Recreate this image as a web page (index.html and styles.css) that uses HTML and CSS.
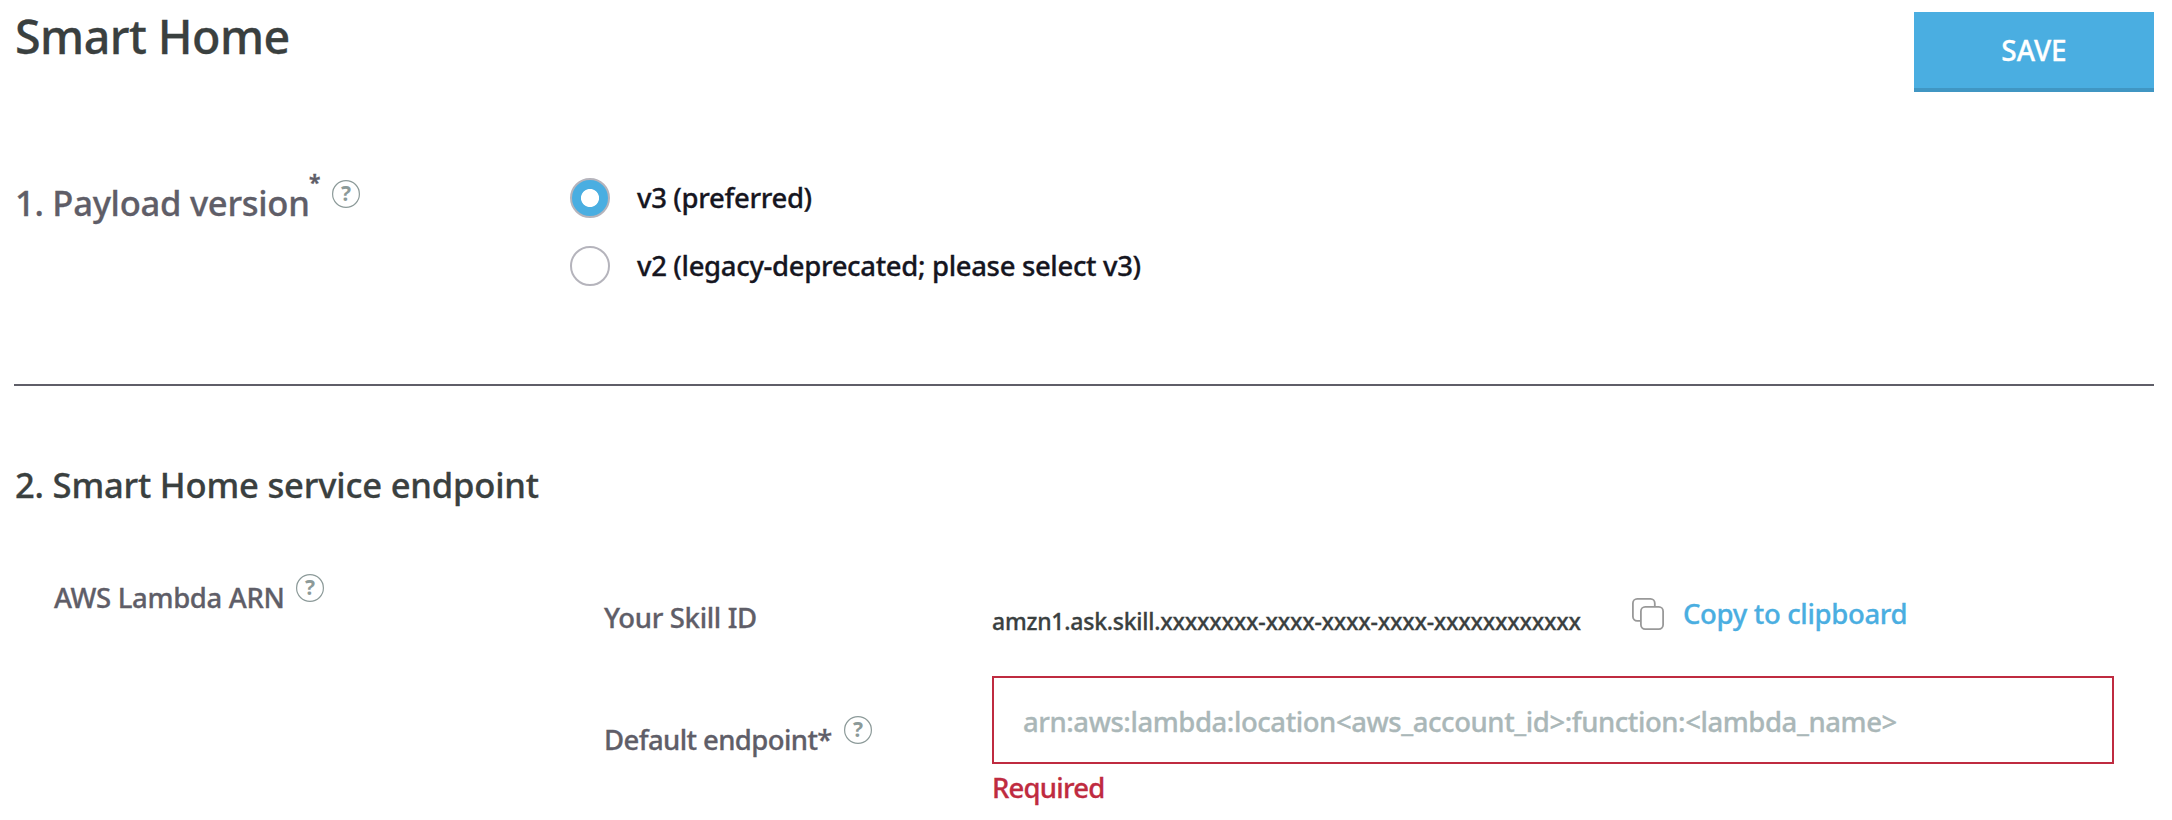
FILE: index.html
```html
<!DOCTYPE html>
<html lang="en">
<head>
<meta charset="utf-8">
<title>Smart Home</title>
<link rel="stylesheet" href="styles.css">
</head>
<body>
<header class="page-header">
  <h1 class="page-title">Smart Home</h1>
  <button class="save">SAVE</button>
</header>
<section class="payload">
  <div class="payload-label"><h2 class="heading heading-muted">1. Payload version</h2><span class="star">*</span>
    <svg class="help" viewBox="0 0 28 28"><circle cx="14" cy="14" r="13.4"/><text x="14" y="21.2">?</text></svg></div>
  <div class="options">
    <label class="option"><span class="radio radio-on"></span><span>v3 (preferred)</span></label>
    <label class="option"><span class="radio"></span><span>v2 (legacy-deprecated; please select v3)</span></label>
  </div>
</section>
<section class="endpoint">
  <h2 class="heading heading-endpoint">2. Smart Home service endpoint</h2>
  <div class="arn">
    <div class="label arn-label"><span>AWS Lambda ARN</span>
      <svg class="help" viewBox="0 0 28 28"><circle cx="14" cy="14" r="13.4"/><text x="14" y="21.2">?</text></svg></div>
    <div class="fields">
      <div class="label skill-label">Your Skill ID</div>
      <div class="skill">
        <span class="skill-id">amzn1.ask.skill.xxxxxxxx-xxxx-xxxx-xxxx-xxxxxxxxxxxx</span>
        <a class="copy"><svg class="copy-icon" viewBox="0 0 32 32"><path d="M8.5 22.8H5.2A4.3 4.3 0 0 1 .9 18.5V5.2A4.3 4.3 0 0 1 5.2 .9H18.5A4.3 4.3 0 0 1 22.8 5.2V8.5"/><rect x="8.9" y="8.9" width="22.2" height="22.2" rx="4.3"/></svg><span>Copy to clipboard</span></a>
      </div>
      <div class="label default-label"><span>Default endpoint*</span>
        <svg class="help" viewBox="0 0 28 28"><circle cx="14" cy="14" r="13.4"/><text x="14" y="21.2">?</text></svg></div>
      <div class="default">
        <div class="input">arn:aws:lambda:location&lt;aws_account_id&gt;:function:&lt;lambda_name&gt;</div>
        <div class="error">Required</div>
      </div>
    </div>
  </div>
</section>
</body>
</html>
```
FILE: styles.css
```css
* { box-sizing: border-box; }
body { margin: 0; padding: 0 18px 0 14px; background: #fff; font-family: "Noto Sans", "Open Sans", sans-serif; font-weight: 500; font-size: 27.5px; letter-spacing: -0.34px; color: #5f5e68; white-space: nowrap; -webkit-text-stroke: 0.3px currentColor; }
h1, h2 { margin: 0; font-weight: 500; }
.page-header { display: flex; justify-content: space-between; height: 92px; }
.page-title { padding-left: 1px; font-size: 46.6px; line-height: 72px; letter-spacing: -0.55px; color: #3a403f; }
.save { width: 240px; height: 80px; margin-top: 12px; padding: 0; border: 0; border-bottom: 4px solid #4096c3; background: #4aaee1; color: #fff; font: inherit; font-size: 28px; line-height: 76px; letter-spacing: 0; }
.payload { display: grid; grid-template-columns: 556px 1fr; height: 294px; padding-top: 86px; border-bottom: 2px solid #5f5e68; }
.payload-label, .label, .option, .skill, .copy { display: flex; align-items: flex-start; }
.heading { padding-left: 1px; font-size: 34.6px; line-height: 49px; letter-spacing: -0.19px; color: #3a403f; }
.heading-muted { width: 295px; letter-spacing: -0.28px; color: #5f5e68; }
.star { width: 23px; margin-top: -6px; font-size: 21px; font-weight: 700; line-height: 20px; }
.help { flex: none; width: 28px; height: 28px; margin-top: 2px; }
.help circle { fill: none; stroke: #8c9a99; stroke-width: 1.2; }
.help text { fill: #8c9a99; font-size: 21px; font-weight: 700; letter-spacing: 0; text-anchor: middle; -webkit-text-stroke: 0; }
.options { display: grid; gap: 28px; align-content: start; }
.option { gap: 27px; height: 40px; line-height: 40px; color: #16161f; }
.radio { flex: none; width: 40px; height: 40px; border: 2px solid #b5b4bc; border-radius: 50%; background: #fff; }
.radio-on { background: radial-gradient(circle, #fff 8.6px, #4aaee1 9.4px); }
.heading-endpoint { padding-top: 74px; }
.arn { display: grid; grid-template-columns: 550px 1fr; padding: 65px 40px 0 40px; }
.arn-label { line-height: 48px; }
.arn-label span { width: 242px; }
.arn-label .help { margin: 0; }
.fields { display: grid; grid-template-columns: 388px 1fr; grid-template-rows: 102px auto; }
.skill-label { line-height: 88px; }
.skill-id { width: 640px; font-size: 23px; line-height: 94px; letter-spacing: -0.24px; color: #3a403f; }
.copy { gap: 19px; line-height: 80px; color: #4aaee1; }
.copy-icon { width: 32px; height: 32px; margin-top: 24px; fill: none; stroke: #999; stroke-width: 1.8; }
.default-label { line-height: 128px; letter-spacing: -0.6px; }
.default-label span { width: 240px; }
.default-label .help { margin: 40px 0 0; }
.input { height: 88px; padding-left: 29px; border: 2px solid #bf2b40; line-height: 87px; letter-spacing: -0.43px; color: #aab7b8; }
.error { line-height: 48px; letter-spacing: -0.8px; color: #bf2b40; }
```
